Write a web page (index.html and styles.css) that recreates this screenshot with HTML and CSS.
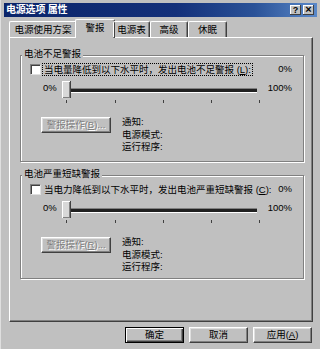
FILE: index.html
```html
<!DOCTYPE html>
<html lang="zh-CN">
  <head>
    <meta charset="UTF-8" />
    <meta name="viewport" content="width=device-width, initial-scale=1.0" />
    <title>电源选项 属性</title>
    <link rel="stylesheet" href="styles.css">
  </head>
  <body>
    <div class="dialog">
      <div class="titlebar">
        <span class="title">电源选项 属性</span>
        <div class="caption-btns">
          <span class="cap-btn">?</span>
          <span class="cap-btn close">×</span>
        </div>
      </div>

      <ul class="tabs">
        <li class="tab t1">电源使用方案</li>
        <li class="tab t2 active">警报</li>
        <li class="tab t3">电源表</li>
        <li class="tab t4">高级</li>
        <li class="tab t5">休眠</li>
      </ul>

      <div class="panel">
        <!-- 电池不足警报 -->
        <div class="group g1">
          <span class="group-title">电池不足警报</span>
          <div class="check-row">
            <span class="checkbox"></span>
            <span class="check-text focus">当电量降低到以下水平时，发出电池不足警报 (<u>L</u>):</span>
            <span class="value">0%</span>
          </div>
          <div class="slider-row">
            <span class="min">0%</span>
            <div class="slider">
              <div class="track"></div>
              <div class="thumb"></div>
              <div class="ticks"><i></i><i></i><i></i><i></i><i></i></div>
            </div>
            <span class="max">100%</span>
          </div>
          <div class="action-row">
            <span class="btn disabled">警报操作(<u>B</u>)...</span>
            <div class="info">
              <div>通知:</div>
              <div>电源模式:</div>
              <div>运行程序:</div>
            </div>
          </div>
        </div>

        <!-- 电池严重短缺警报 -->
        <div class="group g2">
          <span class="group-title">电池严重短缺警报</span>
          <div class="check-row">
            <span class="checkbox"></span>
            <span class="check-text">当电力降低到以下水平时，发出电池严重短缺警报 (<u>C</u>):</span>
            <span class="value">0%</span>
          </div>
          <div class="slider-row">
            <span class="min">0%</span>
            <div class="slider">
              <div class="track"></div>
              <div class="thumb"></div>
              <div class="ticks"><i></i><i></i><i></i><i></i><i></i></div>
            </div>
            <span class="max">100%</span>
          </div>
          <div class="action-row">
            <span class="btn disabled">警报操作(<u>R</u>)...</span>
            <div class="info">
              <div>通知:</div>
              <div>电源模式:</div>
              <div>运行程序:</div>
            </div>
          </div>
        </div>
      </div>

      <div class="footer">
        <span class="btn default">确定</span>
        <span class="btn">取消</span>
        <span class="btn">应用(<u>A</u>)</span>
      </div>
    </div>
  </body>
</html>
```

FILE: styles.css
```css
body {
  margin: 0;
  background: #c0c0c0;
  font: 9.5px/12px "Liberation Sans", "Noto Sans CJK SC", sans-serif;
  color: #000;
}
u {
  text-decoration: underline;
}
.dialog {
  width: 320px;
  height: 349px;
  box-sizing: border-box;
  padding: 3px 0 0 3px;
  border-left: 1px solid #dfdfdf;
  background: #c0c0c0;
}

/* title bar */
.titlebar {
  height: 14px;
  margin-right: 3px;
  padding: 0 3px 0 2px;
  display: flex;
  align-items: center;
  justify-content: space-between;
  background: linear-gradient(to right, #0a246a, #14307a 55%, #2a5298 80%, #5a88c8);
  color: #fff;
}
.titlebar .title {
  font-weight: bold;
  font-size: 10px;
  letter-spacing: -0.2px;
}
.caption-btns {
  display: flex;
  gap: 2px;
}
.cap-btn {
  width: 11px;
  height: 10px;
  box-sizing: border-box;
  background: #c0c0c0;
  color: #000;
  font: bold 9px/10px "Liberation Sans", sans-serif;
  text-align: center;
  box-shadow: inset -1px -1px #404040, inset 1px 1px #fff;
}
.cap-btn.close {
  font-size: 11px;
  line-height: 9px;
}

/* tabs */
.tabs {
  list-style: none;
  margin: 2px 0 0 5px;
  padding: 0;
  height: 18px;
  display: flex;
  align-items: flex-end;
  position: relative;
  z-index: 1;
}
.tab {
  height: 16px;
  box-sizing: border-box;
  line-height: 15px;
  text-align: center;
  border-top: 1px solid #fff;
  border-left: 1px solid #fff;
  border-right: 1px solid #404040;
  box-shadow: inset -1px 0 #808080;
  border-radius: 2px 2px 0 0;
}
.t1 { width: 68px; }
.t2 { width: 36px; }
.t3 { width: 37px; }
.t4 { width: 38px; }
.t5 { width: 39px; }
.tab.active {
  height: 19px;
  margin: 0 -2px -1px;
  width: 40px;
  line-height: 16px;
  background: #c0c0c0;
}

/* main panel */
.panel {
  width: 304px;
  height: 285px;
  box-sizing: border-box;
  margin-left: 5px;
  padding: 17px 8px 0 10px;
  border-top: 1px solid #fff;
  border-left: 1px solid #fff;
  border-right: 1px solid #404040;
  border-bottom: 1px solid #404040;
  box-shadow: inset -1px -1px #808080;
}

.group {
  position: relative;
  box-sizing: border-box;
  border: 1px solid #808080;
  box-shadow: 1px 1px 0 #fff, inset 1px 1px 0 #fff;
  padding: 7px 11px 0 9px;
}
.g1 { height: 107px; }
.g2 { height: 104px; margin-top: 13px; }
.group-title {
  position: absolute;
  top: -8px;
  left: 1px;
  padding: 0 2px;
  background: #c0c0c0;
}

.check-row {
  display: flex;
  align-items: center;
  height: 12px;
}
.checkbox {
  width: 10px;
  height: 10px;
  box-sizing: border-box;
  background: #fff;
  border-top: 1px solid #808080;
  border-left: 1px solid #808080;
  box-shadow: inset 1px 1px #404040, 1px 1px #dfdfdf;
  margin-right: 2px;
}
.check-text {
  padding: 0 1px;
  border: 1px dotted transparent;
  line-height: 11px;
}
.check-text.focus {
  border-color: #000;
}
.check-row .value {
  margin-left: auto;
}

.slider-row {
  display: flex;
  height: 23px;
  margin-top: 6px;
}
.slider-row .min {
  margin: 1px 0 0 13px;
  width: 18px;
}
.slider-row .max {
  margin: 1px 0 0 8px;
}
.slider {
  position: relative;
  width: 206px;
}
.track {
  position: absolute;
  left: 6px;
  right: 3px;
  top: 7px;
  height: 3px;
  background: #202020;
  border-top: 1px solid #808080;
  border-bottom: 1px solid #fff;
}
.thumb {
  position: absolute;
  left: 2px;
  top: 0;
  width: 8px;
  height: 17px;
  background: #d8d8d8;
  box-shadow: inset 1px 1px #fff, inset -1px -1px #808080;
  border-right: 1px solid #404040;
}
.thumb::after {
  content: "";
  position: absolute;
  left: 0;
  top: 17px;
  border-left: 4px solid transparent;
  border-right: 5px solid transparent;
  border-top: 4px solid #c8c8c8;
}
.ticks {
  position: absolute;
  left: 6px;
  width: 194px;
  top: 19px;
  display: flex;
  justify-content: space-between;
}
.ticks i {
  width: 1px;
  height: 3px;
  background: #404040;
}

.action-row {
  display: flex;
  align-items: flex-start;
  margin-top: 13px;
}
.action-row .btn {
  margin-left: 11px;
  width: 70px;
}
.info {
  margin: -1px 0 0 11px;
  line-height: 12.5px;
}

/* buttons */
.btn {
  display: block;
  height: 16px;
  box-sizing: border-box;
  text-align: center;
  line-height: 14px;
  background: #c0c0c0;
  border: 1px solid;
  border-color: #fff #404040 #404040 #fff;
  box-shadow: inset -1px -1px #808080, inset 1px 1px #dfdfdf;
}
.btn.disabled {
  color: #808080;
  text-shadow: 1px 1px #fff;
}
.btn.default {
  border-color: #000;
  box-shadow: inset 1px 1px #fff, inset -1px -1px #404040, inset -2px -2px #808080;
}

.footer {
  display: flex;
  justify-content: flex-end;
  gap: 5px;
  margin: 5px 8px 0 0;
}
.footer .btn {
  width: 59px;
}
```
